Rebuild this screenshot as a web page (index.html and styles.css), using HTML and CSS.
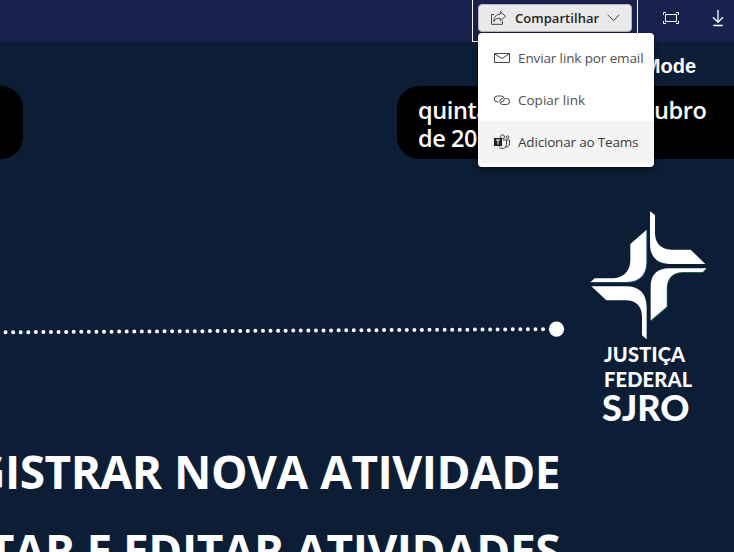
FILE: index.html
```
<!DOCTYPE html>
<html lang="pt-BR">
<head>
<meta charset="utf-8">
<title>SJRO</title>
<link rel="stylesheet" href="styles.css">
</head>
<body>
<header class="topbar">
  <div class="share-box">
    <button class="share-button">
      <svg class="share-icon" width="17" height="16" viewBox="0 0 17 16"><path d="M4 4.500H1.500v9.800h11V11M10.300 1.500l5.200 4.800-5.200 4.500V8.200C7 8.200 5 9.200 3.800 11.700c0-4.800 2.500-7.400 6.500-7.600z"/></svg>
      <span class="share-label">Compartilhar</span>
      <svg class="chevron" width="13" height="8" viewBox="0 0 13 8"><path d="M.7.8l5.800 5.800L12.300.8"/></svg>
    </button>
    <div class="menu">
      <div class="menu-item">
        <svg width="18" height="16" viewBox="0 0 18 16"><path d="M1.500 3.500h15v9h-15zM1.500 3.800L9 8.500l7.500-4.700"/></svg>
        <span class="item-email">Enviar link por email</span>
      </div>
      <div class="menu-item">
        <svg width="18" height="16" viewBox="0 0 18 16"><path d="M5.500 10H4.300a3 3 0 0 1 0-6h4a3 3 0 0 1 0 6M12.300 6.500h1.300a3 3 0 0 1 0 6H9.800a3 3 0 0 1 0-6"/></svg>
        <span class="item-copy">Copiar link</span>
      </div>
      <div class="menu-item active">
        <svg width="18" height="16" viewBox="0 0 18 16"><path d="M10 6h3.500v4.500a4 4 0 0 1-7.500 2M13.500 6h2.900v4a3 3 0 0 1-3.400 3"/><circle cx="9.500" cy="2.800" r="2"/><circle cx="14.500" cy="3.300" r="1.400"/><path class="tile" d="M1 4h8v8H1z"/><path class="tee" d="M3 6h4M5 6v4.500"/></svg>
        <span class="item-teams">Adicionar ao Teams</span>
      </div>
    </div>
  </div>
  <svg class="fit-icon" width="18" height="14" viewBox="0 0 18 14"><path d="M3.500 3.500h11v7h-11zM1.500 4V1.500H4M14 1.500h2.500V4M16.500 10v2.500H14M4 12.500H1.500V10"/></svg>
  <svg class="down-icon" width="12" height="17" viewBox="0 0 12 17"><path d="M6 0v12M1 7.300l5 5 5-5M1.200 15.500h9.600"/></svg>
</header>
<main class="report">
  <div class="mode">Mode</div>
  <div class="pills">
    <div class="pill pill-left"></div>
    <div class="pill pill-date"><div class="date-row">quinta-feira, 6 de outubro</div><div>de 2022</div></div>
  </div>
  <div class="brand-row">
    <svg class="timeline" width="580" height="40" viewBox="0 0 580 40">
      <path class="dots" d="M-2 22.300L543.300 19.200"/>
      <circle cx="556.500" cy="19.200" r="7.600"/>
    </svg>
    <div class="brand">
      <svg class="star" width="140" height="142" viewBox="0 0 420 426">
        <path class="blue" d="M199 90V187c0 39-23 59-59 59H32"/>
        <path class="green" d="M379 205L367 216H310c-32 0-50 19-50 51v53l-48 41"/>
        <path d="M199 90L151 132v48c0 34-22 55-54 55H44L32 246h108c36 0 59-20 59-59z"/>
        <path d="M379 205H268c-35 0-56 19-56 53v103l48-41v-53c0-32 18-51 50-51h58z"/>
        <path d="M210 34l15 11v54c0 31 19 50 49 50h58l44 43H271c-39 0-61-21-61-60z"/>
        <path d="M34 259h103c41 0 63 22 63 63v96l-14-12v-55c0-32-18-50-49-50H79z"/>
      </svg>
      <div class="brand-justica">JUSTIÇA</div>
      <div class="brand-federal">FEDERAL</div>
      <div class="brand-sjro">SJRO</div>
    </div>
  </div>
  <nav class="actions">
    <div class="action action-new">REGISTRAR NOVA ATIVIDADE</div>
    <div class="action action-edit">CONSULTAR E EDITAR ATIVIDADES</div>
  </nav>
</main>
</body>
</html>
```
FILE: styles.css
```
* { box-sizing: border-box; }
body {
  margin: 0;
  width: 734px;
  height: 552px;
  overflow: hidden;
  background: #0b1e35;
  color: #fff;
  font-family: "Open Sans", "Noto Sans", sans-serif;
}
div, span { white-space: nowrap; }
svg { flex: none; fill: none; display: block; }
.topbar {
  height: 42px;
  background: #18214e;
  display: flex;
  align-items: flex-start;
  padding-left: 472px;
}
.share-box {
  position: relative;
  width: 166px;
  height: 42px;
  border: 1px solid #fff;
  border-top: 0;
  padding: 4px 5px;
}
.share-button {
  width: 154px;
  height: 28px;
  border: 1px solid #b9b9b9;
  border-radius: 4px;
  background: #eaeaea;
  color: #242424;
  display: flex;
  align-items: center;
  padding: 0 0 0 11px;
  font: 600 13px "Open Sans", sans-serif;
}
.share-icon, .chevron { stroke: #444; stroke-width: 1; }
.share-label { width: 84px; margin-left: 8px; text-align: left; letter-spacing: .05px; }
.chevron { margin-left: 8px; }
.menu {
  position: absolute;
  z-index: 2;
  left: 5px;
  top: 33px;
  width: 176px;
  height: 134px;
  padding: 4px 0;
  border-radius: 4px;
  background: #fff;
  box-shadow: 0 2px 5px rgba(0, 0, 0, .5);
}
.menu-item {
  height: 42px;
  display: flex;
  align-items: center;
  gap: 7px;
  padding-left: 15px;
  font: 400 13.500px/40px "Open Sans", sans-serif;
  color: #505050;
}
.menu-item svg { stroke: #444; }
.item-email { letter-spacing: -.12px; }
.item-copy { letter-spacing: 0; }
.item-teams { letter-spacing: -.18px; }
.active { background: #f4f4f4; color: #3a3a3a; }
.menu-item .tile { fill: #222; stroke: none; }
.menu-item .tee { stroke: #fff; }
.fit-icon { margin: 11px 0 0 24px; stroke: #fff; }
.down-icon { margin: 10px 0 0 32px; stroke: #fff; stroke-width: 1.3; }
.report { height: 510px; overflow: hidden; }
.mode {
  height: 44px;
  padding: 13px 38px 0 0;
  text-align: right;
  font: bold 20px/23px "Liberation Sans", sans-serif;
}
.pills { display: flex; justify-content: space-between; height: 73px; }
.pill { background: #000; }
.pill-left { width: 23px; border-radius: 0 22px 22px 0; }
.pill-date {
  width: 337px;
  border-radius: 22px 0 0 22px;
  padding: 10px 28px 0 21px;
  font: 600 23.500px/28px "Open Sans", sans-serif;
  letter-spacing: -.4px;
}
.date-row { word-spacing: 2px; }
.brand-row { display: flex; height: 281px; padding-top: 41px; }
.timeline { margin-top: 110px; fill: #fff; }
.dots { stroke: #fff; stroke-width: 4; stroke-linecap: round; stroke-dasharray: 0 7.570; }
.brand { width: 140px; }
.star { fill: #fff; }
.blue, .green { fill: none; stroke-width: 5; }
.blue { stroke: #28578a; }
.green { stroke: #188044; }
.brand-justica, .brand-federal {
  margin-left: 24px;
  font: 900 20px/25px Lato, sans-serif;
  letter-spacing: .2px;
}
.brand-sjro { margin-left: 22px; font: 900 36px/30px Lato, sans-serif; }
.actions {
  width: 560px;
  display: flex;
  flex-direction: column;
  align-items: flex-end;
}
.action { height: 79px; font: bold 46px/62px "Open Sans", sans-serif; letter-spacing: -.5px; }
.action-new { word-spacing: 1px; }
.action-edit { letter-spacing: -.5px; }
```
